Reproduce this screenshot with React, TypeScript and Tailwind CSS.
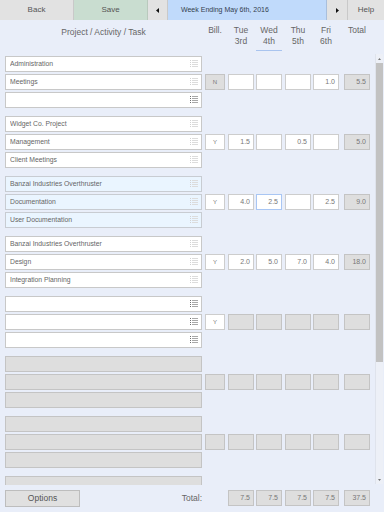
import React from 'react';

type Cells = {
  bill?: string;
  billGray?: boolean;
  days: string[];
  daysGray?: boolean;
  total?: string;
  focus?: number;
};

type Row = { text?: string; gray?: boolean; icon?: 'light' | 'dark'; cells?: Cells };
type Group = { blue?: boolean; rows: Row[] };

const groups: Group[] = [
  {
    rows: [
      { text: 'Administration' },
      { text: 'Meetings', cells: { bill: 'N', billGray: true, days: ['', '', '', '1.0'], total: '5.5' } },
      { text: '', icon: 'dark' },
    ],
  },
  {
    rows: [
      { text: 'Widget Co. Project' },
      { text: 'Management', cells: { bill: 'Y', days: ['1.5', '', '0.5', ''], total: '5.0' } },
      { text: 'Client Meetings' },
    ],
  },
  {
    blue: true,
    rows: [
      { text: 'Banzai Industries Overthruster' },
      { text: 'Documentation', cells: { bill: 'Y', days: ['4.0', '2.5', '', '2.5'], total: '9.0', focus: 1 } },
      { text: 'User Documentation' },
    ],
  },
  {
    rows: [
      { text: 'Banzai Industries Overthruster' },
      { text: 'Design', cells: { bill: 'Y', days: ['2.0', '5.0', '7.0', '4.0'], total: '18.0' } },
      { text: 'Integration Planning' },
    ],
  },
  {
    rows: [
      { text: '', icon: 'dark' },
      { text: '', icon: 'dark', cells: { bill: 'Y', days: ['', '', '', ''], daysGray: true, total: '' } },
      { text: '', icon: 'dark' },
    ],
  },
  {
    rows: [
      { gray: true },
      { gray: true, cells: { bill: '', billGray: true, days: ['', '', '', ''], daysGray: true, total: '' } },
      { gray: true },
    ],
  },
  {
    rows: [
      { gray: true },
      { gray: true, cells: { bill: '', billGray: true, days: ['', '', '', ''], daysGray: true, total: '' } },
      { gray: true },
    ],
  },
  { rows: [{ gray: true }] },
];

// little "pick from list" glyph at the right of each task box
function ListIcon({ dark }: { dark?: boolean }) {
  const tick = dark ? '#6f6f6f' : '#d2d2d2';
  const line = dark ? '#a8a8a8' : '#dcdcdc';
  return (
    <svg width="8" height="8" viewBox="0 0 8 8" className="shrink-0">
      {[0, 2, 4, 6].map((y) => (
        <g key={y}>
          <rect x="0" y={y} width="1" height="1" fill={tick} />
          <rect x="2" y={y} width="6" height="1" fill={line} />
        </g>
      ))}
    </svg>
  );
}

function Cell({ w, ml, value, gray, focus, center }: { w: string; ml: string; value?: string; gray?: boolean; focus?: boolean; center?: boolean }) {
  const skin = focus
    ? 'bg-white border-[#a9c6f3]'
    : gray
    ? 'bg-[#dedede] border-[#c4c4c4]'
    : 'bg-white border-[#cdcdcd]';
  return (
    <div
      className={`${w} ${ml} h-4 shrink-0 border flex items-center text-[#777] ${
        center ? 'justify-center text-[6px]' : 'justify-end pr-[3px] text-[7px]'
      } ${skin}`}
    >
      {value}
    </div>
  );
}

function RowLine({ row, blue }: { row: Row; blue?: boolean }) {
  const c = row.cells;
  return (
    <div className="flex h-4">
      <div
        className={`ml-[5px] w-[197px] h-4 shrink-0 border flex items-center pl-1 pr-[3px] ${
          row.gray ? 'bg-[#dedede] border-[#c4c4c4]' : blue ? 'bg-[#eaf5ff] border-[#c8ccd2]' : 'bg-white border-[#c8c8c8]'
        }`}
      >
        <span className="flex-1 text-[6.8px] text-[#666] truncate">{row.text}</span>
        {!row.gray && <ListIcon dark={row.icon === 'dark'} />}
      </div>
      {c && (
        <>
          <Cell w="w-[20px]" ml="ml-[3px]" value={c.bill} gray={c.billGray} center />
          <Cell w="w-[26px]" ml="ml-[3px]" value={c.days[0]} gray={c.daysGray} />
          <Cell w="w-[26px]" ml="ml-[2px]" value={c.days[1]} gray={c.daysGray} focus={c.focus === 1} />
          <Cell w="w-[26px]" ml="ml-[3px]" value={c.days[2]} gray={c.daysGray} />
          <Cell w="w-[26px]" ml="ml-[2px]" value={c.days[3]} gray={c.daysGray} />
          <Cell w="w-[26px]" ml="ml-[5px]" value={c.total} gray />
        </>
      )}
    </div>
  );
}

function Tri({ dir }: { dir: 'l' | 'r' }) {
  return (
    <svg width="3" height="5" viewBox="0 0 3 5">
      <path d={dir === 'l' ? 'M3 0 L0 2.5 L3 5 Z' : 'M0 0 L3 2.5 L0 5 Z'} fill="#111" />
    </svg>
  );
}

export default function App() {
  const heads = [
    { w: 'w-[20px] ml-[3px]', a: 'Bill.', b: '' },
    { w: 'w-[26px] ml-[3px]', a: 'Tue', b: '3rd' },
    { w: 'w-[26px] ml-[2px]', a: 'Wed', b: '4th', sel: true },
    { w: 'w-[26px] ml-[3px]', a: 'Thu', b: '5th' },
    { w: 'w-[26px] ml-[2px]', a: 'Fri', b: '6th' },
    { w: 'w-[26px] ml-[5px]', a: 'Total', b: '' },
  ];

  return (
    <div className="w-[384px] h-[512px] flex flex-col bg-[#e9eef9] font-['Liberation_Sans',Arial,sans-serif] text-[#555] overflow-hidden">
      <div className="h-5 flex shrink-0 text-[8px] text-[#555]">
        <button className="w-[74px] bg-[#e2e2e2] border-r border-[#c9c9c9] flex items-center justify-center">Back</button>
        <button className="w-[74px] bg-[#c9ddd0] border-r border-[#b9c9bd] flex items-center justify-center">Save</button>
        <button className="w-[20px] bg-[#e2e2e2] border-r border-[#c9c9c9] flex items-center justify-center"><Tri dir="l" /></button>
        <div className="w-[159px] bg-[#c0dafb] border-r border-[#a9bfdc] flex items-center pl-[13px] text-[7px] text-[#34414f]">
          Week Ending May 6th, 2016
        </div>
        <button className="w-[21px] bg-[#e2e2e2] border-r border-[#c9c9c9] flex items-center justify-center"><Tri dir="r" /></button>
        <button className="flex-1 bg-[#e2e2e2] flex items-center justify-center">Help</button>
      </div>

      <div className="h-8 shrink-0 flex text-[8.5px] text-[#666] pt-[5px]">
        <div className="ml-[5px] w-[197px] text-center pt-px">Project / Activity / Task</div>
        {heads.map((h) => (
          <div key={h.a} className={`${h.w} shrink-0 flex flex-col items-center leading-[11px]`}>
            <span>{h.a}</span>
            {h.b && <span>{h.b}</span>}
            {h.sel && <span className="mt-[3px] h-px w-[26px] bg-[#a9c4ef]" />}
          </div>
        ))}
      </div>

      <div className="flex-1 flex min-h-0">
        <div className="flex-1 overflow-hidden pt-1 flex flex-col gap-2">
          {groups.map((g, i) => (
            <div key={i} className="flex flex-col gap-[2px]">
              {g.rows.map((r, j) => (
                <RowLine key={j} row={r} blue={g.blue} />
              ))}
            </div>
          ))}
        </div>
        <div className="w-2 mr-px bg-[#edf0f7] flex flex-col mt-[2px] mb-px border-l border-[#dfe3ec]">
          <div className="h-[9px] flex items-center justify-center">
            <svg width="3" height="2" viewBox="0 0 3 2"><path d="M0 2 L1.5 0 L3 2 Z" fill="#777" /></svg>
          </div>
          <div className="h-[299px] bg-[#c2c2c2]" />
          <div className="flex-1" />
          <div className="h-[9px] flex items-center justify-center">
            <svg width="3" height="2" viewBox="0 0 3 2"><path d="M0 0 L1.5 2 L3 0 Z" fill="#777" /></svg>
          </div>
        </div>
      </div>

      <div className="h-[27px] shrink-0 flex items-start pt-[5px]">
        <button className="ml-[5px] w-[75px] h-[17px] bg-[#e0e0e0] border border-[#bdbdbd] text-[8.5px] text-[#555] flex items-center justify-center">
          Options
        </button>
        <div className="w-[122px] h-[17px] flex items-center justify-end text-[8.5px] text-[#666]">Total:</div>
        <div className="w-[20px] ml-[3px]" />
        <Cell w="w-[26px]" ml="ml-[3px]" value="7.5" gray />
        <Cell w="w-[26px]" ml="ml-[2px]" value="7.5" gray />
        <Cell w="w-[26px]" ml="ml-[3px]" value="7.5" gray />
        <Cell w="w-[26px]" ml="ml-[2px]" value="7.5" gray />
        <Cell w="w-[26px]" ml="ml-[5px]" value="37.5" gray />
      </div>
    </div>
  );
}
